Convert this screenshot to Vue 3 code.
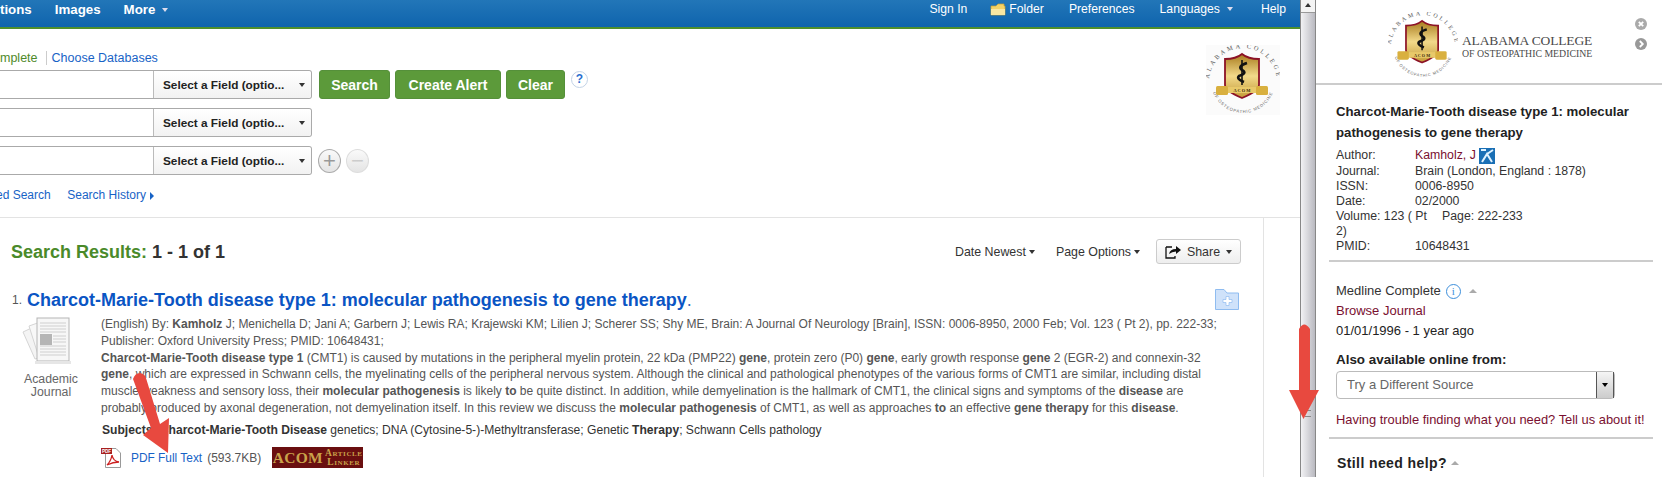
<script setup>
const nameRow = [
  ['Author:', 'Kamholz, J'],
]
const metaRows = [
  ['Journal:', 'Brain (London, England : 1878)'],
  ['ISSN:', '0006-8950'],
  ['Date:', '02/2000'],
]
const searchRows = [1, 2, 3]
</script>

<template>
  <div class="page">
    <svg class="defs" width="0" height="0" aria-hidden="true">
      <defs>
        <linearGradient id="gold" x1="0" y1="0" x2="0" y2="1">
          <stop offset="0" stop-color="#a77a1c" />
          <stop offset="0.5" stop-color="#f2d98a" />
          <stop offset="1" stop-color="#c39a36" />
        </linearGradient>
        <path id="arcTop" d="M3 37 A33 33 0 0 1 71 37" />
        <path id="arcBot" d="M6 44 A32 32 0 0 0 68 44" />
        <symbol id="seal" viewBox="0 0 74 70">
          <text class="seal-top"><textPath href="#arcTop" startOffset="50%" text-anchor="middle">ALABAMA COLLEGE</textPath></text>
          <text class="seal-bot"><textPath href="#arcBot" startOffset="50%" text-anchor="middle">OF OSTEOPATHIC MEDICINE</textPath></text>
          <path d="M19 14 Q30 14 36 9 Q42 14 53 14 V40 Q53 46 36 53 Q19 46 19 40 Z" fill="url(#gold)" stroke="#8c1226" stroke-width="1.8" />
          <path d="M36 15 V40" stroke="#111" stroke-width="1.6" />
          <path d="M41 18 Q31 21 36 25 Q42 28 33 31 Q30 34 38 37" fill="none" stroke="#111" stroke-width="2.600" />
          <rect x="16" y="42" width="40" height="6" fill="#e8c96a" />
          <rect x="10" y="41" width="12" height="9" rx="1.500" fill="#d9b03f" />
          <rect x="50" y="41" width="12" height="9" rx="1.500" fill="#d9b03f" />
          <text x="36" y="47" class="seal-mid" text-anchor="middle">A C O M</text>
        </symbol>
      </defs>
    </svg>

    <main class="main">
      <header class="topbar">
        <nav class="nav-left">
          <span>tions</span>
          <span>Images</span>
          <span>More<i class="mini-down"></i></span>
        </nav>
        <nav class="nav-right">
          <span class="signin">Sign In</span>
          <span class="folder">
            <svg width="16" height="13" viewBox="0 0 16 13"><path d="M1 3 H6 L8 1 H14 V3 H15 V12 H1 Z" fill="#f3d267" stroke="#c9a032" stroke-width=".7" /><path d="M1 6 H15 V12 H1 Z" fill="#f9e7a2" /></svg>
            Folder
          </span>
          <span>Preferences</span>
          <span class="langs">Languages<i class="mini-down"></i></span>
          <span>Help</span>
        </nav>
      </header>

      <section class="search">
        <div class="search-form">
          <div class="db-line">
            <span class="db-name">mplete</span>
            <a class="link db-choose">Choose Databases</a>
          </div>
          <div v-for="r in searchRows" :key="r" class="row">
            <div class="field">
              <div class="term"></div>
              <div class="select"><span>Select a Field (optio...</span><i class="down"></i></div>
            </div>
            <template v-if="r === 1">
              <button class="btn search-btn">Search</button>
              <button class="btn alert">Create Alert</button>
              <button class="btn clear">Clear</button>
              <span class="help">?</span>
            </template>
            <div v-if="r === 3" class="round-btns">
              <span class="round">+</span>
              <span class="round off">−</span>
            </div>
          </div>
          <div class="search-links">
            <a class="link cut">ed Search</a>
            <a class="link">Search History<i class="right-arrow"></i></a>
          </div>
        </div>
        <svg class="seal-main" width="74" height="70"><use href="#seal" /></svg>
      </section>

      <section class="results">
        <div class="results-head">
          <h2 class="results-title"><b>Search Results:</b> 1 - 1 of 1</h2>
          <div class="tools">
            <span class="tool">Date Newest<i class="down"></i></span>
            <span class="tool">Page Options<i class="down"></i></span>
            <button class="share">
              <svg width="17" height="14" viewBox="0 0 17 14"><path d="M1 2 H7 M1 2 V13 H10 V11" fill="none" stroke="#111" stroke-width="1.3" /><path d="M4 9 Q5 4 11 4 V1 L16 5 L11 9 V6.5 Q7 6.5 4 9 Z" fill="#111" /></svg>
              Share<i class="down"></i>
            </button>
          </div>
        </div>

        <div class="record">
          <div class="title-line">
            <span class="num">1.</span>
            <h3 class="rec-title"><a>Charcot-Marie-Tooth disease type 1: molecular pathogenesis to gene therapy</a><span class="dot">.</span></h3>
            <svg class="add-folder" width="24" height="21" viewBox="0 0 24 21"><path d="M.5 .5 H9 L12 4 H23.5 V20.5 H.5 Z" fill="#cfe2fa" stroke="#8fbcf0" /><path d="M11 7.5 H14 V10.500 H17 V13.500 H14 V16.500 H11 V13.500 H8 V10.500 H11 Z" fill="#fff" stroke="#8fbcf0" stroke-width=".7" /></svg>
          </div>
          <div class="rec-body">
            <div class="type">
              <svg width="50" height="50" viewBox="0 0 50 50">
                <path d="M1 15 L20 6 V40 L13 42 Z" fill="#f4f4f4" stroke="#d5d5d5" />
                <path d="M7 9 L24 3 V42 L18 44 Z" fill="#f8f8f8" stroke="#d5d5d5" />
                <rect x="15" y="1" width="32" height="43" fill="#f7f7f7" stroke="#b5b5b5" />
                <path d="M18 6 H44 M18 9 H44 M18 12 H44 M18 15 H44 M31 19 H44 M31 22 H44 M31 25 H44 M18 29 H44 M18 32 H44 M18 35 H44 M18 38 H44" stroke="#cfcfcf" />
                <rect x="18" y="17" width="12" height="11" fill="#b5b5b5" />
                <rect x="13" y="44" width="36" height="3" fill="#e6e6e6" />
              </svg>
              <span class="type-label">Academic<br />Journal</span>
            </div>
            <div class="rec-text">
              <p class="abstract">
                (English) By: <b>Kamholz</b> J; Menichella D; Jani A; Garbern J; Lewis RA; Krajewski KM; Lilien J; Scherer SS; Shy ME, Brain: A Journal Of Neurology [Brain], ISSN: 0006-8950, 2000 Feb; Vol. 123 ( Pt 2), pp. 222-33;<br />
                Publisher: Oxford University Press; PMID: 10648431;<br />
                <b>Charcot-Marie-Tooth disease type 1</b> (CMT1) is caused by mutations in the peripheral myelin protein, 22 kDa (PMP22) <b>gene</b>, protein zero (P0) <b>gene</b>, early growth response <b>gene</b> 2 (EGR-2) and connexin-32<br />
                <b>gene</b>, which are expressed in Schwann cells, the myelinating cells of the peripheral nervous system. Although the clinical and pathological phenotypes of the various forms of CMT1 are similar, including distal<br />
                muscle weakness and sensory loss, their <b>molecular pathogenesis</b> is likely <b>to</b> be quite distinct. In addition, while demyelination is the hallmark of CMT1, the clinical signs and symptoms of the <b>disease</b> are<br />
                probably produced by axonal degeneration, not demyelination itself. In this review we discuss the <b>molecular pathogenesis</b> of CMT1, as well as approaches <b>to</b> an effective <b>gene therapy</b> for this <b>disease</b>.
              </p>
              <p class="subjects"><b>Subjects:</b> <b>Charcot-Marie-Tooth Disease</b> genetics; DNA (Cytosine-5-)-Methyltransferase; Genetic <b>Therapy</b>; Schwann Cells pathology</p>
              <div class="fulltext">
                <svg width="20" height="21" viewBox="0 0 20 21">
                  <path d="M4.500 1.500 H15 L19.500 6 V20.500 H4.500 Z" fill="#fff" stroke="#999" />
                  <rect x="0" y="1" width="11" height="6" fill="#a82020" />
                  <text x="5.500" y="5.800" class="pdf-tag" text-anchor="middle">PDF</text>
                  <path d="M6 18 Q10 14 11 8 Q12 14 18 15 Q12 15 6 18 Z" fill="none" stroke="#c22" stroke-width="1.300" />
                </svg>
                <a class="pdf">PDF Full Text</a>
                <span class="size">(593.7KB)</span>
                <span class="linker"><span class="acom">ACOM</span><span class="article">Article<br />Linker</span></span>
              </div>
            </div>
          </div>
        </div>
      </section>
    </main>

    <div class="scrollbar">
      <div class="scroll-up"></div>
      <div class="thumb"><span class="grip"></span></div>
    </div>

    <aside class="panel">
      <div class="brand">
        <svg width="70" height="67"><use href="#seal" /></svg>
        <div class="brand-text">
          <div class="brand-a">ALABAMA COLLEGE</div>
          <div class="brand-b">OF OSTEOPATHIC MEDICINE</div>
        </div>
        <div class="brand-ctrl">
          <svg width="12" height="12" viewBox="0 0 12 12"><circle cx="6" cy="6" r="6" fill="#aaa" /><path d="M3.800 3.800 L8.200 8.200 M8.200 3.800 L3.800 8.200" stroke="#fff" stroke-width="1.800" /></svg>
          <svg width="12" height="12" viewBox="0 0 12 12"><circle cx="6" cy="6" r="6" fill="#999" /><path d="M4.800 3 L7.800 6 L4.800 9" fill="none" stroke="#fff" stroke-width="1.800" /></svg>
        </div>
      </div>

      <div class="panel-sec info">
        <h4 class="art-title">Charcot-Marie-Tooth disease type 1: molecular pathogenesis to gene therapy</h4>
        <div class="meta">
          <div v-for="m in nameRow" :key="m[0]" class="meta-row">
            <span class="k">{{ m[0] }}</span>
            <span class="maroon">{{ m[1] }}</span>
            <svg class="orcid" width="16" height="16" viewBox="0 0 16 16"><rect width="16" height="16" fill="#1a6fb5" /><path d="M2 2 H7 M3 14 L8 6 L13 14 M8 6 L14 2" fill="none" stroke="#dff2ff" stroke-width="2" /></svg>
          </div>
          <div v-for="m in metaRows" :key="m[0]" class="meta-row">
            <span class="k">{{ m[0] }}</span>
            <span>{{ m[1] }}</span>
          </div>
          <div class="meta-row vol">
            <span class="vol-k">Volume: 123 ( Pt 2)</span>
            <span>Page: 222-233</span>
          </div>
          <div class="meta-row">
            <span class="k">PMID:</span>
            <span>10648431</span>
          </div>
        </div>
      </div>

      <div class="panel-sec source">
        <div class="src-name">
          Medline Complete
          <span class="info-i">i</span>
          <i class="up"></i>
        </div>
        <div class="maroon src-line">Browse Journal</div>
        <div class="src-line">01/01/1996 - 1 year ago</div>
        <div class="also">Also available online from:</div>
        <div class="try">
          <span class="try-text">Try a Different Source</span>
          <span class="try-btn"><i class="try-arrow"></i></span>
        </div>
        <div class="maroon trouble">Having trouble finding what you need? Tell us about it!</div>
      </div>

      <div class="still">Still need help?<i class="up"></i></div>
    </aside>

    <svg class="annot" width="1662" height="477" viewBox="0 0 1662 477" aria-hidden="true">
      <path d="M133 379 Q135 373 140 373 Q145 374 146 378 L160 424 L169 418 L168 453 L143 435 L151 428 Z" fill="#e8493f" />
      <path d="M1299 329 Q1304 320 1310 329 V390 H1319 L1303.500 419 L1289 390 H1299 Z" fill="#e8493f" />
    </svg>
  </div>
</template>

<style>
html, body { margin: 0; background: #fff; overflow: hidden; }
</style>

<style scoped>
.page { position: relative; display: flex; width: 1662px; height: 477px; overflow: hidden; background: #fff; font-family: "Liberation Sans", Arial, sans-serif; font-size: 12px; color: #555; }
.defs { position: absolute; }
.seal-top { font: 6.4px "Liberation Serif", serif; letter-spacing: 2.5px; fill: #555; }
.seal-bot { font: 4.2px "Liberation Sans", sans-serif; letter-spacing: .8px; fill: #666; }
.seal-mid { font: bold 4.4px "Liberation Serif", serif; fill: #3a2a08; }
.pdf-tag { font: bold 4.6px "Liberation Sans", sans-serif; fill: #fff; }
h2, h3, h4, p { margin: 0; font-weight: normal; }
i { display: inline-block; font-style: normal; }

.main { width: 1300px; flex: none; display: flex; flex-direction: column; }
.topbar { height: 27px; box-sizing: content-box; border-bottom: 2px solid #4f8f2c; background: linear-gradient(#2276b8, #0f64ad); color: #fff; display: flex; justify-content: space-between; align-items: flex-start; }
.nav-left { display: flex; gap: 23px; font-weight: bold; font-size: 13.3px; line-height: 19px; }
.nav-right { display: flex; align-items: center; font-size: 12.2px; line-height: 18px; gap: 25px; padding-right: 14px; }
.signin { margin-right: -2px; }
.folder { display: flex; align-items: center; gap: 3px; }
.mini-down { width: 0; height: 0; border: 3px solid transparent; border-top: 4px solid #dde; border-bottom: 0; margin-left: 7px; vertical-align: 2px; }
.langs { margin-right: 3px; }

.search { height: 189px; flex: none; box-sizing: border-box; border-bottom: 1px solid #e3e3e3; display: flex; justify-content: space-between; padding: 16px 20px 0 0; }
.link { color: #1763c6; }
.search-form { display: flex; flex-direction: column; }
.db-line { display: flex; align-items: center; height: 16px; margin-top: 5px; margin-bottom: 4px; font-size: 12.5px; }
.db-name { color: #4f8a2a; padding-right: 8px; border-right: 1px solid #ccc; }
.db-choose { padding-left: 5px; }
.row { display: flex; align-items: stretch; height: 29px; margin-bottom: 9px; }
.field { display: flex; width: 312px; box-sizing: border-box; border: 1px solid #aaa; border-left: 0; border-radius: 0 3px 3px 0; flex: none; background: #fff; }
.term { width: 153px; flex: none; border-right: 1px solid #bbb; }
.select { flex: 1; display: flex; align-items: center; justify-content: space-between; padding: 0 6px 0 9px; font-size: 11.8px; font-weight: bold; color: #222; white-space: nowrap; background: linear-gradient(#fff, #f2f2f2); border-radius: 0 3px 3px 0; }
.down { width: 0; height: 0; border: 3.500px solid transparent; border-top: 4px solid #333; border-bottom: 0; margin-left: 3px; vertical-align: 2px; }
.btn { height: 29px; box-sizing: border-box; border: 1px solid #55903a; border-radius: 3px; background: #5c9a3a; color: #fff; font: bold 14px "Liberation Sans", sans-serif; padding: 0; margin-left: 5px; }
.search-btn { width: 71px; margin-left: 7px; }
.alert { width: 106px; }
.clear { width: 59px; }
.help { margin: 1px 0 0 6px; width: 15px; height: 15px; border-radius: 50%; border: 1px solid #c3d3e6; color: #2a6fd0; font: bold 12px/15px "Liberation Sans", sans-serif; text-align: center; }
.round-btns { display: flex; gap: 5px; margin: 3px 0 0 6px; }
.round { width: 21px; height: 22px; border-radius: 50%; border: 1px solid #aaa; color: #999; background: linear-gradient(#fafafa, #e4e4e4); font: 22px/21px "Liberation Sans", sans-serif; text-align: center; }
.round.off { border-color: #ddd; color: #ccc; }
.search-links { display: flex; gap: 16.500px; font-size: 12px; margin-top: 4px; line-height: 15px; }
.cut { margin-left: -4px; }
.right-arrow { width: 0; height: 0; border: 4.500px solid transparent; border-left: 4px solid #1763c6; border-right: 0; margin-left: 4px; vertical-align: -1px; }
.seal-main { background: #fbfbfb; }

.results { flex: 1; width: 1264px; box-sizing: border-box; border-right: 1px solid #e3e3e3; }
.results-head { height: 67px; box-sizing: border-box; padding: 21px 22px 0 11px; display: flex; justify-content: space-between; align-items: flex-start; }
.results-title { font-size: 18px; font-weight: bold; color: #333; line-height: 26px; }
.results-title b { color: #4a8a2a; }
.tools { display: flex; align-items: center; color: #333; font-size: 12.4px; }
.tool { margin-right: 21px; }
.tool + .share { margin-left: -5px; }
.tool .down { margin-left: 3px; }
.share { display: flex; align-items: center; justify-content: center; gap: 5px; width: 85px; height: 25px; padding: 0; border: 1px solid #ccc; border-radius: 3px; background: linear-gradient(#fff, #eee); font: 12.4px "Liberation Sans", sans-serif; color: #333; }
.share .down { margin-left: 1px; }
.record { padding-left: 12px; padding-right: 24px; }
.title-line { display: flex; align-items: flex-start; height: 31px; }
.num { width: 15px; font-size: 12px; line-height: 30px; color: #555; }
.rec-title { flex: 1; font-size: 18px; font-weight: bold; line-height: 30px; }
.rec-title a { color: #0a55c4; }
.dot { font-weight: normal; color: #3a6fb8; }
.add-folder { margin-top: 4px; }
.rec-body { display: flex; }
.type { width: 78px; margin: 0 1px 0 10px; flex: none; display: flex; flex-direction: column; align-items: flex-start; padding-top: 1px; box-sizing: border-box; }
.type-label { width: 58px; margin-top: 6px; text-align: center; line-height: 13px; font-size: 12.3px; color: #666; }
.abstract { line-height: 16.8px; white-space: nowrap; font-size: 12px; }
.subjects { margin-top: 5px; line-height: 17px; color: #333; white-space: nowrap; font-size: 12.1px; padding-left: 1px; }
.fulltext { display: flex; align-items: center; margin-top: 7.500px; height: 23px; }
.pdf { color: #1763c6; margin-left: 10px; font-size: 11.900px; }
.size { margin-left: 5px; }
.linker { margin-left: 11px; width: 91px; height: 21px; background: #6a0f10; color: #c9a24a; display: flex; align-items: center; justify-content: center; gap: 2px; font-family: "Liberation Serif", serif; }
.acom { font-size: 15.500px; font-weight: bold; letter-spacing: .3px; }
.article { font-size: 9.500px; line-height: 8.500px; font-weight: bold; letter-spacing: .6px; text-align: center; font-variant: small-caps; }

.scrollbar { width: 16px; flex: none; box-sizing: border-box; border-left: 1px solid #888; border-right: 1px solid #888; background: linear-gradient(90deg, #f2f2f4, #dcdce0 40%, #b9b9c0); display: flex; flex-direction: column; }
.scroll-up { height: 12px; background: #f4f4f4; border-bottom: 1px solid #999; position: relative; }
.scroll-up::after { content: ""; position: absolute; left: 4px; top: 3px; border: 3px solid transparent; border-bottom: 4px solid #333; border-top: 0; }
.thumb { flex: 1; position: relative; }
.grip { position: absolute; left: 4px; top: 397px; width: 6px; height: 5px; border-top: 1px solid #888; border-bottom: 1px solid #888; }

.panel { flex: 1; min-width: 0; color: #222; }
.brand { height: 85px; box-sizing: border-box; border-bottom: 2px solid #ccc; display: flex; align-items: flex-start; padding: 12px 0 0 72px; position: relative; }
.brand-text { font-family: "Liberation Serif", serif; color: #4a4a4a; margin: 21px 0 0 4px; }
.brand-a { font-size: 13.500px; line-height: 15px; letter-spacing: -.15px; }
.brand-b { font-size: 9.800px; line-height: 12px; }
.brand-ctrl { position: absolute; top: 18px; right: 15px; display: flex; flex-direction: column; gap: 8px; }
.panel-sec { margin: 0 9px 0 13px; }
.info { height: 177px; box-sizing: border-box; border-bottom: 2px solid #ccc; padding: 17px 0 0 7px; }
.art-title { font-size: 13.200px; font-weight: bold; line-height: 20.500px; color: #222; }
.meta { margin-top: 5px; line-height: 15px; font-size: 12.300px; color: #333; }
.meta-row { display: flex; }
.k { width: 79px; flex: none; }
.maroon { color: #7a1030; }
.orcid { margin-left: 3px; }
.vol-k { width: 92px; flex: none; margin-right: 14px; }
.source { height: 177px; box-sizing: border-box; border-bottom: 2px solid #ccc; padding: 19px 0 0 7px; font-size: 13px; }
.src-name { display: flex; align-items: center; line-height: 20px; color: #333; }
.info-i { width: 13px; height: 13px; border-radius: 50%; border: 1px solid #3d8fdb; color: #3d8fdb; font: 11px/13px "Liberation Serif", serif; text-align: center; margin-left: 5px; }
.up { width: 0; height: 0; border: 4px solid transparent; border-bottom: 4px solid #aaa; border-top: 0; margin-left: 8px; }
.src-line { line-height: 20px; }
.also { margin-top: 9px; font-size: 13.400px; font-weight: bold; line-height: 20px; }
.try { width: 279px; height: 28px; margin-top: 1px; box-sizing: border-box; border: 1px solid #bbb; border-radius: 4px; display: flex; justify-content: space-between; align-items: stretch; }
.try-text { padding-left: 10px; line-height: 26px; color: #666; }
.try-btn { width: 16px; background: linear-gradient(#f5f5f5, #ccc); border-left: 1px solid #555; border-right: 1px solid #555; display: flex; align-items: center; justify-content: center; }
.try-arrow { width: 0; height: 0; border: 3px solid transparent; border-top: 4px solid #000; border-bottom: 0; }
.trouble { margin-top: 11px; line-height: 20px; font-size: 12.900px; }
.still { padding: 14px 0 0 21px; font-size: 14px; letter-spacing: .4px; font-weight: bold; line-height: 20px; color: #222; }
.still .up { margin-left: 4px; vertical-align: 3px; }
.annot { position: absolute; left: 0; top: 0; pointer-events: none; }
</style>
